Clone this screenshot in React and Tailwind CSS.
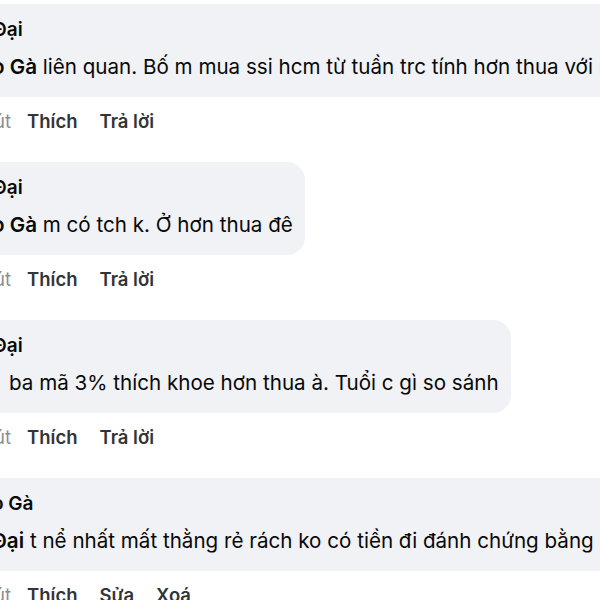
import React from "react";

function Comment({ name, body, actions, last, wide }) {
  return (
    <div className={"flex flex-col items-start " + (last ? "" : "mb-[29px]")}>
      <div
        className={
          "rounded-[18px] bg-[#f0f2f5] pl-[20px] pt-[11px] pb-[15px] whitespace-nowrap " +
          (wide ? "pr-[40px]" : "pr-[12px]")
        }
      >
        <div className="text-[19px] font-semibold leading-[30px] text-[#080809]">{name}</div>
        <div className="mt-[7px] text-[20.6px] leading-[30px] text-[#080809]">{body}</div>
      </div>
      <div className="mt-[12px] flex items-center pl-[20px] text-[18.5px] leading-[24px] whitespace-nowrap">
        <span className="ml-[-6px] text-[#8a8d91]">út</span>
        {actions.map((a, i) => (
          <span
            key={a}
            className={(i === 0 ? "ml-[16px]" : "ml-[22px]") + " font-semibold text-[#333436]"}
          >
            {a}
          </span>
        ))}
      </div>
    </div>
  );
}

export default function App() {
  return (
    <div className="w-[600px] h-[600px] overflow-hidden bg-white font-['Inter',sans-serif]">
      <div className="flex flex-col pt-[4px] ml-[-20px]">
        <Comment
          name={<span className="ml-[-7px]">Đại</span>}
          body={
            <span className="ml-[-8px]">
              <span className="font-semibold">o Gà</span> liên quan. Bố m mua ssi hcm từ tuần trc tính hơn thua với mấy
            </span>
          }
          actions={["Thích", "Trả lời"]}
        />
        <Comment
          name={<span className="ml-[-7px]">Đại</span>}
          body={
            <span className="ml-[-8px]">
              <span className="font-semibold">o Gà</span> m có tch k. Ở hơn thua đê
            </span>
          }
          actions={["Thích", "Trả lời"]}
        />
        <Comment
          name={<span className="ml-[-7px]">Đại</span>}
          body={<span className="ml-[9px]">ba mã 3% thích khoe hơn thua à. Tuổi c gì so sánh</span>}
          actions={["Thích", "Trả lời"]}
        />
        <Comment
          name={<span className="ml-[-8px]">o Gà</span>}
          body={
            <span className="ml-[-8px]">
              <span className="font-semibold">Đại</span> t nể nhất mất thằng rẻ rách ko có tiền đi đánh chứng bằng
            </span>
          }
          actions={["Thích", "Sửa", "Xoá"]}
          wide
          last
        />
      </div>
    </div>
  );
}
